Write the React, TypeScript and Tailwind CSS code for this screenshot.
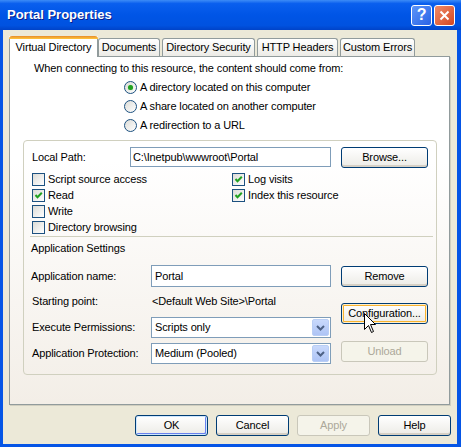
import React from "react";

type BtnKind = "normal" | "default" | "hot" | "disabled";

const XpButton = ({
  label,
  kind = "normal",
  className = "",
}: {
  label: string;
  kind?: BtnKind;
  className?: string;
}) => {
  const ring =
    kind === "default"
      ? "shadow-[inset_0_0_0_1px_#CEE7FF,inset_-1px_-1px_0_1px_#6982EE]"
      : kind === "hot"
        ? "shadow-[inset_0_0_0_1px_#FFF0CF,inset_0_0_0_2px_#F8B330]"
        : "shadow-[inset_0_-2px_0_#D6D0C5]";
  if (kind === "disabled") {
    return (
      <div
        className={`flex items-center justify-center rounded-[3px] border border-[#C9C7BA] bg-[#F5F4EA] text-[#ACA899] ${className}`}
      >
        {label}
      </div>
    );
  }
  return (
    <div
      className={`flex items-center justify-center rounded-[3px] border border-[#003C74] bg-linear-to-b from-white to-[#ECEBE6] ${ring} ${className}`}
    >
      {label}
    </div>
  );
};

const CheckBox = ({ checked = false }: { checked?: boolean }) => (
  <span className="w-[13px] h-[13px] shrink-0 border border-[#1C5180] bg-linear-to-br from-[#DCDCD7] to-white flex items-center justify-center">
    {checked && (
      <svg width="9" height="9" viewBox="0 0 9 9">
        <path d="M1.5 4 L3.5 6.2 L7.8 1.8" stroke="#21A121" strokeWidth="2" fill="none" />
      </svg>
    )}
  </span>
);

const Radio = ({ checked = false }: { checked?: boolean }) => (
  <span className="w-[13px] h-[13px] shrink-0 rounded-full border border-[#1C5180] bg-linear-to-br from-[#DCDCD7] to-white flex items-center justify-center">
    {checked && <span className="w-[5px] h-[5px] rounded-full bg-[#21A121] shadow-[0_0_1px_#7BD47B]" />}
  </span>
);

const Combo = ({ value }: { value: string }) => (
  <div className="w-[180px] h-[21px] border border-[#7F9DB9] bg-white flex items-center pl-[3px] pr-px">
    <span className="flex-1">{value}</span>
    <span className="w-[17px] h-[17px] rounded-[2px] border border-[#B9CEF5] bg-linear-to-b from-[#C9D9FC] to-[#AEC4F5] flex items-center justify-center">
      <svg width="9" height="6" viewBox="0 0 9 6">
        <path d="M1 1 L4.5 4.5 L8 1" stroke="#4D6185" strokeWidth="2" fill="none" />
      </svg>
    </span>
  </div>
);

const tabs = [
  { name: "Documents", w: "w-[62px] ml-0" },
  { name: "Directory Security", w: "w-[93px] ml-[2px]" },
  { name: "HTTP Headers", w: "w-[81px] ml-[2px]" },
  { name: "Custom Errors", w: "w-[75px] ml-[2px]" },
];

export default function App() {
  return (
    <div className="w-[461px] h-[447px] flex flex-col bg-[#0555E6] font-['Liberation_Sans',Arial,sans-serif] text-[11px] tracking-[-0.13px] text-black">
      {/* title bar */}
      <div className="h-[30px] shrink-0 flex items-center pl-[7px] pr-[6px] bg-[linear-gradient(to_bottom,#3D8CF7_0%,#0A5FEE_12%,#0055E6_50%,#0052E0_85%,#0043C8_100%)]">
        <span className="text-white font-bold text-[13px] tracking-normal [text-shadow:1px_1px_#0A1E8C]">
          Portal Properties
        </span>
        <div className="ml-auto flex gap-[2px]">
          <div className="w-[21px] h-[21px] rounded-[3px] border border-white bg-linear-to-br from-[#5D95F8] to-[#2A62E6] flex items-center justify-center text-white font-bold text-[16px] leading-none">
            ?
          </div>
          <div className="w-[21px] h-[21px] rounded-[3px] border border-white bg-linear-to-br from-[#F08A66] to-[#D2451E] flex items-center justify-center">
            <svg width="11" height="11" viewBox="0 0 11 11">
              <path d="M1.5 1.5 L9.5 9.5 M9.5 1.5 L1.5 9.5" stroke="white" strokeWidth="2" />
            </svg>
          </div>
        </div>
      </div>

      {/* client */}
      <div className="flex-1 ml-[3px] mr-[4px] mb-[3px] bg-[#ECE9D8] flex flex-col pl-[6px] pt-[6px]">
        {/* tabs */}
        <div className="flex items-end h-[20px]">
          <div className="relative z-10 -mb-px w-[89px] h-[21px] flex flex-col bg-white">
            <div className="h-[3px] rounded-t-[3px] bg-linear-to-b from-[#E68B2C] to-[#FFC73C]" />
            <div className="flex-1 border-x border-[#919B9C] flex items-center justify-center pb-[2px]">
              Virtual Directory
            </div>
          </div>
          {tabs.map((t) => (
            <div
              key={t.name}
              className={`${t.w} h-[18px] flex items-center justify-center border border-b-0 border-[#919B9C] rounded-t-[3px] bg-linear-to-b from-white to-[#ECEBE6]`}
            >
              {t.name}
            </div>
          ))}
        </div>

        {/* tab page */}
        <div className="w-[441px] h-[349px] border border-[#919B9C] shadow-[1px_1px_0_#D0CEBF] bg-linear-to-b from-white from-30% to-[#F3EEE7] flex flex-col">
          <div className="mt-[5px] ml-[24px] h-[13px] leading-[13px]">
            When connecting to this resource, the content should come from:
          </div>
          <div className="ml-[114px] mt-[3px] flex flex-col">
            <div className="h-[19px] flex items-center gap-[3px]">
              <Radio checked />
              A directory located on this computer
            </div>
            <div className="h-[19px] flex items-center gap-[3px]">
              <Radio />
              A share located on another computer
            </div>
            <div className="h-[19px] flex items-center gap-[3px]">
              <Radio />
              A redirection to a URL
            </div>
          </div>

          {/* group */}
          <div className="mt-[5px] ml-[13px] w-[414px] h-[235px] border border-[#D0D0BF] rounded-[4px] flex flex-col">
            <div className="mt-[6px] pl-[8px] flex items-center h-[20px]">
              <span className="w-[98px]">Local Path:</span>
              <div className="w-[201px] h-[20px] border border-[#7F9DB9] bg-white flex items-center pl-[2px]">
                C:\Inetpub\wwwroot\Portal
              </div>
              <XpButton label="Browse..." className="ml-[10px] w-[87px] h-[21px]" />
            </div>

            <div className="mt-[4px] pl-[8px] flex flex-col">
              <div className="flex h-[16px] items-center">
                <span className="w-[200px] flex items-center gap-[3px]">
                  <CheckBox />
                  Script source access
                </span>
                <span className="flex items-center gap-[3px]">
                  <CheckBox checked />
                  Log visits
                </span>
              </div>
              <div className="flex h-[16px] items-center">
                <span className="w-[200px] flex items-center gap-[3px]">
                  <CheckBox checked />
                  Read
                </span>
                <span className="flex items-center gap-[3px]">
                  <CheckBox checked />
                  Index this resource
                </span>
              </div>
              <div className="flex h-[16px] items-center">
                <span className="flex items-center gap-[3px]">
                  <CheckBox />
                  Write
                </span>
              </div>
              <div className="flex h-[16px] items-center">
                <span className="flex items-center gap-[3px]">
                  <CheckBox />
                  Directory browsing
                </span>
              </div>
            </div>

            <div className="mt-[1px] ml-[6px] mr-[3px] h-px bg-[#D0D0BF]" />
            <div className="mt-[5px] pl-[7px] h-[13px] leading-[13px]">Application Settings</div>

            <div className="mt-[10px] pl-[7px] flex">
              <div className="flex flex-col">
                <div className="h-[22px] flex items-center">
                  <span className="w-[120px]">Application name:</span>
                  <div className="w-[180px] h-[22px] border border-[#7F9DB9] bg-white flex items-center pl-[3px]">
                    Portal
                  </div>
                </div>
                <div className="mt-[7px] h-[14px] flex items-center">
                  <span className="w-[121px] pl-px">Starting point:</span>
                  <span>&lt;Default Web Site&gt;\Portal</span>
                </div>
                <div className="mt-[9px] h-[21px] flex items-center">
                  <span className="w-[120px] pl-px">Execute Permissions:</span>
                  <Combo value="Scripts only" />
                </div>
                <div className="mt-[5px] h-[21px] flex items-center">
                  <span className="w-[120px] pl-px">Application Protection:</span>
                  <Combo value="Medium (Pooled)" />
                </div>
              </div>
              <div className="ml-[10px] flex flex-col">
                <XpButton label="Remove" className="mt-[1px] w-[87px] h-[21px]" />
                <div className="relative mt-[16px]">
                  <XpButton label="Configuration..." kind="hot" className="w-[87px] h-[21px]" />
                  <svg
                    className="absolute left-[23px] top-[10px]"
                    width="13"
                    height="21"
                    viewBox="0 0 13 21"
                  >
                    <path
                      d="M0.5 0.5 L0.5 16.5 L4.5 12.5 L7.5 19.5 L9.5 18.5 L6.5 11.5 L11.5 11.5 Z"
                      fill="white"
                      stroke="black"
                      strokeWidth="1"
                    />
                  </svg>
                </div>
                <XpButton label="Unload" kind="disabled" className="mt-[17px] w-[87px] h-[21px]" />
              </div>
            </div>
          </div>
        </div>

        {/* dialog buttons */}
        <div className="mt-[10px] flex justify-end gap-[8px] pr-[6px]">
          <XpButton label="OK" kind="default" className="w-[73px] h-[21px]" />
          <XpButton label="Cancel" className="w-[73px] h-[21px]" />
          <XpButton label="Apply" kind="disabled" className="w-[73px] h-[21px]" />
          <XpButton label="Help" className="w-[73px] h-[21px]" />
        </div>
      </div>
    </div>
  );
}
